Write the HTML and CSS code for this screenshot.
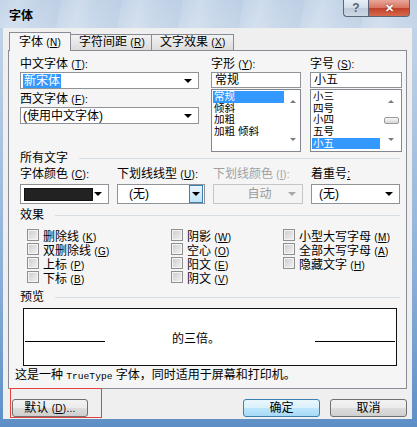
FILE: index.html
```html
<!DOCTYPE html>
<html>
<head>
    <title>字体</title>
    <link rel="stylesheet" href="styles.css">
</head>
<body>
<div class="window">
    <div class="titlebar">
        <span class="title">字体</span>
        <div class="caption">
            <div class="cap help">?</div>
            <div class="cap close">✕</div>
        </div>
    </div>

    <div class="client">
        <div class="tabs">
            <div class="tab active">字体 <span class="mn">(<u>N</u>)</span></div>
            <div class="tab">字符间距 <span class="mn">(<u>R</u>)</span></div>
            <div class="tab">文字效果 <span class="mn">(<u>X</u>)</span></div>
        </div>

        <div class="panel">
            <!-- fonts, style, size -->
            <div class="fonts-row">
                <div class="col-font">
                    <div class="label">中文字体 <span class="mn">(<u>T</u>):</span></div>
                    <div class="combo"><span class="hl">新宋体</span><span class="arrow"></span></div>
                    <div class="label second">西文字体 <span class="mn">(<u>F</u>):</span></div>
                    <div class="combo"><span>(使用中文字体)</span><span class="arrow"></span></div>
                </div>
                <div class="col-list">
                    <div class="label">字形 <span class="mn">(<u>Y</u>):</span></div>
                    <div class="textbox">常规</div>
                    <div class="list">
                        <div class="items">
                            <div class="item sel">常规</div>
                            <div class="item">倾斜</div>
                            <div class="item">加粗</div>
                            <div class="item">加粗 倾斜</div>
                        </div>
                        <div class="scroll">
                            <span class="up"></span>
                            <span class="down"></span>
                        </div>
                    </div>
                </div>
                <div class="col-list">
                    <div class="label">字号 <span class="mn">(<u>S</u>):</span></div>
                    <div class="textbox">小五</div>
                    <div class="list">
                        <div class="items">
                            <div class="item">小三</div>
                            <div class="item">四号</div>
                            <div class="item">小四</div>
                            <div class="item">五号</div>
                            <div class="item sel">小五</div>
                        </div>
                        <div class="scroll wide">
                            <span class="up"></span>
                            <span class="thumb"></span>
                            <span class="down"></span>
                        </div>
                    </div>
                </div>
            </div>

            <div class="group">所有文字</div>
            <div class="attr-row">
                <div class="field">
                    <div class="label tall">字体颜色 <span class="mn">(<u>C</u>):</span></div>
                    <div class="combo big"><span class="swatch"></span><span class="arrow"></span></div>
                </div>
                <div class="field">
                    <div class="label tall">下划线线型 <span class="mn">(<u>U</u>):</span></div>
                    <div class="combo big"><span class="val">(无)</span><span class="arrow-btn"><span class="arrow"></span></span></div>
                </div>
                <div class="field">
                    <div class="label tall off">下划线颜色 <span class="mn">(<u>I</u>):</span></div>
                    <div class="combo big disabled"><span class="val mid">自动</span><span class="arrow"></span></div>
                </div>
                <div class="field">
                    <div class="label tall">着重号<u>:</u></div>
                    <div class="combo big"><span class="val short">(无)</span><span class="arrow"></span></div>
                </div>
            </div>

            <div class="group">效果</div>
            <div class="effects">
                <label class="check"><span class="box"></span><span>删除线 <span class="mn">(<u>K</u>)</span></span></label>
                <label class="check"><span class="box"></span><span>双删除线 <span class="mn">(<u>G</u>)</span></span></label>
                <label class="check"><span class="box"></span><span>上标 <span class="mn">(<u>P</u>)</span></span></label>
                <label class="check"><span class="box"></span><span>下标 <span class="mn">(<u>B</u>)</span></span></label>
                <label class="check"><span class="box"></span><span>阴影 <span class="mn">(<u>W</u>)</span></span></label>
                <label class="check"><span class="box"></span><span>空心 <span class="mn">(<u>O</u>)</span></span></label>
                <label class="check"><span class="box"></span><span>阳文 <span class="mn">(<u>E</u>)</span></span></label>
                <label class="check"><span class="box"></span><span>阴文 <span class="mn">(<u>V</u>)</span></span></label>
                <label class="check"><span class="box"></span><span>小型大写字母 <span class="mn">(<u>M</u>)</span></span></label>
                <label class="check"><span class="box"></span><span>全部大写字母 <span class="mn">(<u>A</u>)</span></span></label>
                <label class="check"><span class="box"></span><span>隐藏文字 <span class="mn">(<u>H</u>)</span></span></label>
            </div>

            <div class="group">预览</div>
            <div class="preview">
                <span class="pv-line"></span>
                <span class="pv-text">的三倍。</span>
                <span class="pv-line"></span>
            </div>
            <div class="info">这是一种 <span class="mono">TrueType</span> 字体，同时适用于屏幕和打印机。</div>
        </div>

        <div class="buttons">
            <div class="btn">默认 <span class="mn">(<u>D</u>)...</span></div>
            <div class="btn-group">
                <div class="btn default">确定</div>
                <div class="btn">取消</div>
            </div>
        </div>
    </div>

    <div class="redbox"></div>
</div>
</body>
</html>
```

FILE: styles.css
```css
* {
    margin: 0;
    padding: 0;
    box-sizing: border-box;
}

body {
    width: 417px;
    height: 427px;
    overflow: hidden;
    font-family: "Liberation Sans", "Noto Sans CJK SC", sans-serif;
    font-size: 12px;
    color: #000;
}

.window {
    position: relative;
    width: 417px;
    height: 427px;
    display: flex;
    flex-direction: column;
    padding: 0 5px 8px 3px;
    background: linear-gradient(180deg, #c5d6ea 0, #bccfe5 60px, #8fb2da 260px, #5d8fc6 100%);
}

/* title bar */
.titlebar {
    height: 30px;
    margin: 0 -5px 0 -3px;
    padding: 0 7px 0 9px;
    display: flex;
    justify-content: space-between;
    align-items: flex-start;
    background:
        repeating-linear-gradient(100deg, rgba(255,255,255,0) 0, rgba(255,255,255,0.18) 18px, rgba(255,255,255,0) 36px, rgba(120,150,190,0.08) 60px),
        linear-gradient(180deg, #c3d4e8, #cbdaeb);
}

.title {
    padding-top: 9px;
    line-height: 14px;
    font-weight: bold;
    font-size: 12px;
}

.caption {
    display: flex;
}

.cap {
    height: 17px;
    display: flex;
    align-items: center;
    justify-content: center;
    border: 1px solid #5a6678;
    border-top: none;
    font-weight: bold;
    font-size: 12px;
}

.help {
    width: 25px;
    border-radius: 0 0 0 4px;
    border-right: none;
    background: linear-gradient(180deg, #e8eef5 0, #d3dde9 50%, #bfcbd9 51%, #cdd8e4 100%);
    color: #5b6573;
}

.close {
    width: 42px;
    border-radius: 0 0 4px 0;
    background: linear-gradient(180deg, #e7a799 0, #d8735f 50%, #c2402a 51%, #d56a4c 100%);
    color: #fff;
    font-size: 11px;
    text-shadow: 0 0 2px #7a2010;
}

/* client */
.client {
    flex: 1;
    display: flex;
    flex-direction: column;
    padding: 4px 5px 2px 5px;
    background: #efefef;
}

.tabs {
    height: 18px;
    display: flex;
    align-items: flex-end;
    padding-left: 1px;
}

.tab {
    height: 16px;
    line-height: 15px;
    padding-left: 8px;
    border: 1px solid #898c95;
    border-bottom: none;
    border-left: none;
    background: linear-gradient(180deg, #f2f2f2, #dcdcdc);
    white-space: nowrap;
}

.tab:nth-child(2) { width: 81px; }
.tab:nth-child(3) { width: 82px; }

.tab.active {
    width: 62px;
    height: 19px;
    margin-bottom: -1px;
    line-height: 18px;
    border-left: 1px solid #898c95;
    background: #f5f5f5;
    position: relative;
    z-index: 1;
    padding-left: 9px;
}

.mn {
    font-size: 10px;
    letter-spacing: 0.3px;
}

.panel {
    border: 1px solid #898c95;
    background: #f5f5f5;
    padding: 6px 6px 4px 11px;
}

.label {
    height: 15px;
    line-height: 15px;
    white-space: nowrap;
}

.label.second {
    margin-top: 3px;
}

.label.tall {
    height: 18px;
    line-height: 18px;
}

.label.off {
    color: #a0a0a0;
}

/* top row */
.fonts-row {
    display: grid;
    grid-template-columns: 179px 90px 89px;
    column-gap: 12px;
}

.fonts-row .col-list:last-child {
    margin-left: -3px;
}

.combo {
    height: 17px;
    border: 1px solid #8f9297;
    background: #fff;
    display: flex;
    align-items: center;
    justify-content: space-between;
    padding: 0 6px 0 2px;
    white-space: nowrap;
    line-height: 14px;
}

.hl {
    background: #3399ff;
    color: #fff;
    padding: 0 1px;
}

.arrow {
    width: 0;
    height: 0;
    border-left: 4px solid transparent;
    border-right: 4px solid transparent;
    border-top: 4px solid #000;
}

.textbox {
    height: 16px;
    border: 1px solid #8f9297;
    background: #fff;
    line-height: 14px;
    padding-left: 3px;
}

.list {
    margin-top: 1px;
    height: 63px;
    border: 1px solid #828790;
    background: #fff;
    display: flex;
    overflow: hidden;
}

.items {
    flex: 1;
    padding: 1px 1px 0 1px;
}

.item {
    height: 11.7px;
    line-height: 11.7px;
    font-size: 10.5px;
    padding-left: 1px;
    white-space: nowrap;
}

.item.sel {
    background: #3399ff;
    color: #fff;
}

.scroll {
    width: 15px;
    display: flex;
    flex-direction: column;
    align-items: center;
    justify-content: space-between;
    padding: 10px 0 10px;
    background: #fff;
}

.scroll.wide {
    width: 20px;
}

.up, .down {
    width: 0;
    height: 0;
    border-left: 3px solid transparent;
    border-right: 3px solid transparent;
}

.up { border-bottom: 3px solid #7a7a7a; }
.down { border-top: 3px solid #7a7a7a; }

.thumb {
    width: 15px;
    height: 7px;
    border: 1px solid #9a9a9a;
    border-radius: 2px;
    background: linear-gradient(180deg, #f7f7f7, #d8d8d8);
}

/* group headers */
.group {
    display: flex;
    align-items: center;
    height: 13px;
    line-height: 13px;
    white-space: nowrap;
}

.group::after {
    content: "";
    flex: 1;
    margin-left: 11px;
    border-top: 1px solid #d5dde3;
}

.attr-row + .group {
    margin-top: 4px;
    height: 14px;
}

.effects + .group {
    margin-top: 6px;
    height: 14px;
}

/* attributes row */
.attr-row {
    display: grid;
    grid-template-columns: 89px 88px 90px 89px;
    column-gap: 8px;
}

.combo.big {
    height: 20px;
    margin-top: 1px;
    padding: 0 6px 0 3px;
}

.swatch {
    width: 69px;
    height: 13px;
    background: #222;
    border: 1px solid #111;
}

.val {
    padding-left: 8px;
}

.val.short {
    padding-left: 4px;
}

.val.mid {
    flex: 1;
    text-align: center;
    padding-left: 14px;
    color: #9a9a9a;
}

.combo.disabled {
    background: #f4f4f4;
    border-color: #c6c6c6;
}

.combo.disabled .arrow {
    border-top-color: #a8a8a8;
}

.arrow-btn {
    width: 14px;
    height: 18px;
    margin-right: -5px;
    border: 1px solid #3c7fb1;
    background: linear-gradient(180deg, #eaf6fd, #bfe4f9);
    display: flex;
    align-items: center;
    justify-content: center;
}

/* effects */
.effects {
    margin: 6px 0 0 7px;
    display: grid;
    grid-template-rows: repeat(4, 14px);
    grid-template-columns: 144px 112px 1fr;
    grid-auto-flow: column;
}

.check {
    display: flex;
    align-items: center;
    white-space: nowrap;
}

.box {
    width: 12px;
    height: 12px;
    margin-right: 4px;
    border: 1px solid #8e8f8f;
    background: linear-gradient(135deg, #cbcbcb, #f3f3f3);
    box-shadow: inset 0 0 0 1px #f4f4f4;
}

/* preview */
.preview {
    margin: 4px 0 0 3px;
    width: 374px;
    height: 58px;
    border: 1px solid #111;
    background: #fff;
    display: grid;
    grid-template-columns: 80px 1fr 80px;
    align-items: center;
    padding: 0 1px;
}

.pv-line {
    border-top: 1px solid #000;
    margin-top: 8px;
}

.pv-text {
    text-align: center;
    padding-right: 28px;
}

.info {
    margin-top: 2px;
    margin-left: -5px;
    line-height: 14px;
    white-space: nowrap;
}

.mono {
    font-family: "Liberation Mono", monospace;
    font-size: 9.6px;
}

/* buttons */
.buttons {
    margin-top: 10px;
    display: flex;
    justify-content: space-between;
    padding-left: 4px;
}

.btn-group {
    display: flex;
    gap: 10px;
}

.btn {
    width: 76px;
    height: 18px;
    line-height: 16px;
    text-align: center;
    border: 1px solid #707070;
    border-radius: 3px;
    background: linear-gradient(180deg, #f2f2f2 0, #ebebeb 50%, #dddddd 51%, #cfcfcf 100%);
    white-space: nowrap;
}

.btn-group .btn {
    width: 77px;
}

.btn.default {
    border-color: #3c7fb1;
    background: linear-gradient(180deg, #eaf6fd 0, #d9f0fc 50%, #bee6fd 51%, #a7d9f5 100%);
}

/* annotation overlay */
.redbox {
    position: absolute;
    left: 10px;
    top: 388px;
    width: 92px;
    height: 30px;
    border: 1px solid #e0443c;
}
```
